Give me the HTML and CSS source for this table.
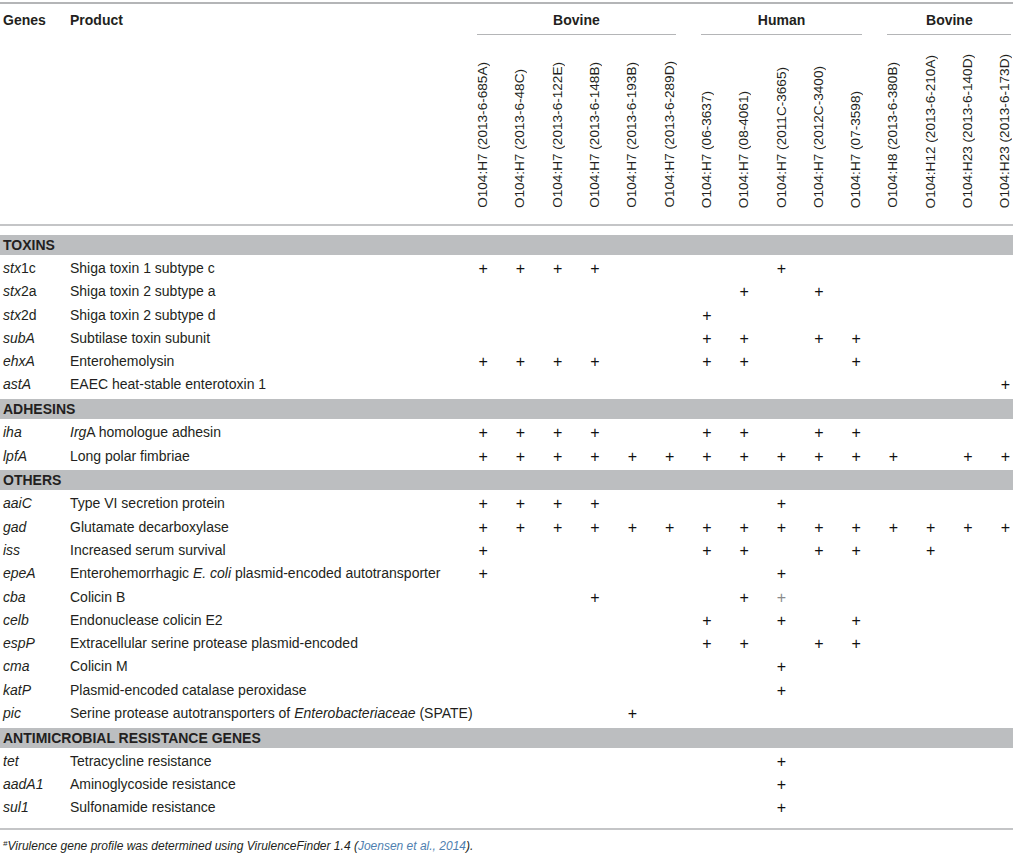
FILE: index.html
```html
<!DOCTYPE html>
<html>
<head>
<meta charset="utf-8">
<link rel="stylesheet" href="styles.css">
</head>
<body>
<div class="table">
  <div class="head-row">
    <div class="h-gene">Genes</div>
    <div class="h-prod">Product</div>
    <div class="group g-bov1">Bovine</div>
    <div class="group g-hum">Human</div>
    <div class="group g-bov2">Bovine</div>
  </div>
  <div class="label-row">
    <div></div><div></div>
    <div class="lab"><span>O104:H7 (2013-6-685A)</span></div>
    <div class="lab"><span>O104:H7 (2013-6-48C)</span></div>
    <div class="lab"><span>O104:H7 (2013-6-122E)</span></div>
    <div class="lab"><span>O104:H7 (2013-6-148B)</span></div>
    <div class="lab"><span>O104:H7 (2013-6-193B)</span></div>
    <div class="lab"><span>O104:H7 (2013-6-289D)</span></div>
    <div class="lab"><span>O104:H7 (06-3637)</span></div>
    <div class="lab"><span>O104:H7 (08-4061)</span></div>
    <div class="lab"><span>O104:H7 (2011C-3665)</span></div>
    <div class="lab"><span>O104:H7 (2012C-3400)</span></div>
    <div class="lab"><span>O104:H7 (07-3598)</span></div>
    <div class="lab"><span>O104:H8 (2013-6-380B)</span></div>
    <div class="lab"><span>O104:H12 (2013-6-210A)</span></div>
    <div class="lab"><span>O104:H23 (2013-6-140D)</span></div>
    <div class="lab"><span>O104:H23 (2013-6-173D)</span></div>
  </div>

  <div class="section first">TOXINS</div>
  <div class="row"><div class="gene"><i>stx</i>1c</div><div class="prod">Shiga toxin 1 subtype c</div>
    <div class="c">+</div><div class="c">+</div><div class="c">+</div><div class="c">+</div><div class="c"></div><div class="c"></div><div class="c"></div><div class="c"></div><div class="c">+</div><div class="c"></div><div class="c"></div><div class="c"></div><div class="c"></div><div class="c"></div><div class="c"></div></div>
  <div class="row"><div class="gene"><i>stx</i>2a</div><div class="prod">Shiga toxin 2 subtype a</div>
    <div class="c"></div><div class="c"></div><div class="c"></div><div class="c"></div><div class="c"></div><div class="c"></div><div class="c"></div><div class="c">+</div><div class="c"></div><div class="c">+</div><div class="c"></div><div class="c"></div><div class="c"></div><div class="c"></div><div class="c"></div></div>
  <div class="row"><div class="gene"><i>stx</i>2d</div><div class="prod">Shiga toxin 2 subtype d</div>
    <div class="c"></div><div class="c"></div><div class="c"></div><div class="c"></div><div class="c"></div><div class="c"></div><div class="c">+</div><div class="c"></div><div class="c"></div><div class="c"></div><div class="c"></div><div class="c"></div><div class="c"></div><div class="c"></div><div class="c"></div></div>
  <div class="row"><div class="gene"><i>subA</i></div><div class="prod">Subtilase toxin subunit</div>
    <div class="c"></div><div class="c"></div><div class="c"></div><div class="c"></div><div class="c"></div><div class="c"></div><div class="c">+</div><div class="c">+</div><div class="c"></div><div class="c">+</div><div class="c">+</div><div class="c"></div><div class="c"></div><div class="c"></div><div class="c"></div></div>
  <div class="row"><div class="gene"><i>ehxA</i></div><div class="prod">Enterohemolysin</div>
    <div class="c">+</div><div class="c">+</div><div class="c">+</div><div class="c">+</div><div class="c"></div><div class="c"></div><div class="c">+</div><div class="c">+</div><div class="c"></div><div class="c"></div><div class="c">+</div><div class="c"></div><div class="c"></div><div class="c"></div><div class="c"></div></div>
  <div class="row"><div class="gene"><i>astA</i></div><div class="prod">EAEC heat-stable enterotoxin 1</div>
    <div class="c"></div><div class="c"></div><div class="c"></div><div class="c"></div><div class="c"></div><div class="c"></div><div class="c"></div><div class="c"></div><div class="c"></div><div class="c"></div><div class="c"></div><div class="c"></div><div class="c"></div><div class="c"></div><div class="c">+</div></div>

  <div class="section">ADHESINS</div>
  <div class="row"><div class="gene"><i>iha</i></div><div class="prod"><i>Irg</i>A homologue adhesin</div>
    <div class="c">+</div><div class="c">+</div><div class="c">+</div><div class="c">+</div><div class="c"></div><div class="c"></div><div class="c">+</div><div class="c">+</div><div class="c"></div><div class="c">+</div><div class="c">+</div><div class="c"></div><div class="c"></div><div class="c"></div><div class="c"></div></div>
  <div class="row"><div class="gene"><i>lpfA</i></div><div class="prod">Long polar fimbriae</div>
    <div class="c">+</div><div class="c">+</div><div class="c">+</div><div class="c">+</div><div class="c">+</div><div class="c">+</div><div class="c">+</div><div class="c">+</div><div class="c">+</div><div class="c">+</div><div class="c">+</div><div class="c">+</div><div class="c"></div><div class="c">+</div><div class="c">+</div></div>

  <div class="section">OTHERS</div>
  <div class="row"><div class="gene"><i>aaiC</i></div><div class="prod">Type VI secretion protein</div>
    <div class="c">+</div><div class="c">+</div><div class="c">+</div><div class="c">+</div><div class="c"></div><div class="c"></div><div class="c"></div><div class="c"></div><div class="c">+</div><div class="c"></div><div class="c"></div><div class="c"></div><div class="c"></div><div class="c"></div><div class="c"></div></div>
  <div class="row"><div class="gene"><i>gad</i></div><div class="prod">Glutamate decarboxylase</div>
    <div class="c">+</div><div class="c">+</div><div class="c">+</div><div class="c">+</div><div class="c">+</div><div class="c">+</div><div class="c">+</div><div class="c">+</div><div class="c">+</div><div class="c">+</div><div class="c">+</div><div class="c">+</div><div class="c">+</div><div class="c">+</div><div class="c">+</div></div>
  <div class="row"><div class="gene"><i>iss</i></div><div class="prod">Increased serum survival</div>
    <div class="c">+</div><div class="c"></div><div class="c"></div><div class="c"></div><div class="c"></div><div class="c"></div><div class="c">+</div><div class="c">+</div><div class="c"></div><div class="c">+</div><div class="c">+</div><div class="c"></div><div class="c">+</div><div class="c"></div><div class="c"></div></div>
  <div class="row"><div class="gene"><i>epeA</i></div><div class="prod">Enterohemorrhagic <i>E. coli</i> plasmid-encoded autotransporter</div>
    <div class="c">+</div><div class="c"></div><div class="c"></div><div class="c"></div><div class="c"></div><div class="c"></div><div class="c"></div><div class="c"></div><div class="c">+</div><div class="c"></div><div class="c"></div><div class="c"></div><div class="c"></div><div class="c"></div><div class="c"></div></div>
  <div class="row"><div class="gene"><i>cba</i></div><div class="prod">Colicin B</div>
    <div class="c"></div><div class="c"></div><div class="c"></div><div class="c">+</div><div class="c"></div><div class="c"></div><div class="c"></div><div class="c">+</div><div class="c light">+</div><div class="c"></div><div class="c"></div><div class="c"></div><div class="c"></div><div class="c"></div><div class="c"></div></div>
  <div class="row"><div class="gene"><i>celb</i></div><div class="prod">Endonuclease colicin E2</div>
    <div class="c"></div><div class="c"></div><div class="c"></div><div class="c"></div><div class="c"></div><div class="c"></div><div class="c">+</div><div class="c"></div><div class="c">+</div><div class="c"></div><div class="c">+</div><div class="c"></div><div class="c"></div><div class="c"></div><div class="c"></div></div>
  <div class="row"><div class="gene"><i>espP</i></div><div class="prod">Extracellular serine protease plasmid-encoded</div>
    <div class="c"></div><div class="c"></div><div class="c"></div><div class="c"></div><div class="c"></div><div class="c"></div><div class="c">+</div><div class="c">+</div><div class="c"></div><div class="c">+</div><div class="c">+</div><div class="c"></div><div class="c"></div><div class="c"></div><div class="c"></div></div>
  <div class="row"><div class="gene"><i>cma</i></div><div class="prod">Colicin M</div>
    <div class="c"></div><div class="c"></div><div class="c"></div><div class="c"></div><div class="c"></div><div class="c"></div><div class="c"></div><div class="c"></div><div class="c">+</div><div class="c"></div><div class="c"></div><div class="c"></div><div class="c"></div><div class="c"></div><div class="c"></div></div>
  <div class="row"><div class="gene"><i>katP</i></div><div class="prod">Plasmid-encoded catalase peroxidase</div>
    <div class="c"></div><div class="c"></div><div class="c"></div><div class="c"></div><div class="c"></div><div class="c"></div><div class="c"></div><div class="c"></div><div class="c">+</div><div class="c"></div><div class="c"></div><div class="c"></div><div class="c"></div><div class="c"></div><div class="c"></div></div>
  <div class="row"><div class="gene"><i>pic</i></div><div class="prod">Serine protease autotransporters of <i>Enterobacteriaceae</i> (SPATE)</div>
    <div class="c"></div><div class="c"></div><div class="c"></div><div class="c"></div><div class="c">+</div><div class="c"></div><div class="c"></div><div class="c"></div><div class="c"></div><div class="c"></div><div class="c"></div><div class="c"></div><div class="c"></div><div class="c"></div><div class="c"></div></div>

  <div class="section">ANTIMICROBIAL RESISTANCE GENES</div>
  <div class="row"><div class="gene"><i>tet</i></div><div class="prod">Tetracycline resistance</div>
    <div class="c"></div><div class="c"></div><div class="c"></div><div class="c"></div><div class="c"></div><div class="c"></div><div class="c"></div><div class="c"></div><div class="c">+</div><div class="c"></div><div class="c"></div><div class="c"></div><div class="c"></div><div class="c"></div><div class="c"></div></div>
  <div class="row"><div class="gene"><i>aadA1</i></div><div class="prod">Aminoglycoside resistance</div>
    <div class="c"></div><div class="c"></div><div class="c"></div><div class="c"></div><div class="c"></div><div class="c"></div><div class="c"></div><div class="c"></div><div class="c">+</div><div class="c"></div><div class="c"></div><div class="c"></div><div class="c"></div><div class="c"></div><div class="c"></div></div>
  <div class="row"><div class="gene"><i>sul1</i></div><div class="prod">Sulfonamide resistance</div>
    <div class="c"></div><div class="c"></div><div class="c"></div><div class="c"></div><div class="c"></div><div class="c"></div><div class="c"></div><div class="c"></div><div class="c">+</div><div class="c"></div><div class="c"></div><div class="c"></div><div class="c"></div><div class="c"></div><div class="c"></div></div>

  <div class="foot">
    <p class="note"><sup>#</sup>Virulence gene profile was determined using VirulenceFinder 1.4 (<span class="ref">Joensen et al., 2014</span>).</p>
  </div>
</div>
</body>
</html>
```

FILE: styles.css
```css
html, body {
  margin: 0;
  padding: 0;
  background: #ffffff;
}

body {
  font-family: "Liberation Sans", Arial, Helvetica, sans-serif;
  font-size: 14px;
  color: #231f20;
}

.table {
  width: 1013px;
  margin-top: 2px;
  border-top: 2px solid #b4b5b7;
  overflow: hidden;
}

.head-row,
.label-row,
.row {
  display: grid;
  grid-template-columns: 70px 394.5px repeat(15, 37.3px);
}

.head-row {
  padding-top: 8px;
  font-weight: bold;
  line-height: 17px;
}

.h-gene {
  padding-left: 3px;
}

.group {
  margin: 0 12.5px;
  padding-bottom: 5px;
  border-bottom: 1px solid #b4b5b7;
  text-align: center;
}

.g-bov1 { grid-column: 3 / span 6; }
.g-hum { grid-column: 9 / span 5; }
.g-bov2 { grid-column: 14 / span 4; }

.label-row {
  height: 189px;
  border-bottom: 2px solid #c4c5c7;
}

.lab {
  display: flex;
  justify-content: center;
  align-items: flex-end;
  padding-bottom: 16px;
}

.lab span {
  writing-mode: vertical-rl;
  transform: rotate(180deg);
  font-size: 13.6px;
  line-height: 14px;
  white-space: nowrap;
}

.section {
  height: 20px;
  line-height: 20px;
  margin: 2.5px 0 2px;
  padding-left: 3px;
  background: #bcbec0;
  font-weight: bold;
}

.section.first {
  margin-top: 9px;
}

.row {
  height: 23.3px;
  line-height: 23.3px;
}

.gene {
  padding-left: 3px;
  white-space: nowrap;
}

.prod {
  white-space: nowrap;
}

.c {
  text-align: center;
  font-size: 16px;
  color: #111111;
}

.c.light {
  color: #8a8a8c;
}

.foot {
  margin-top: 8px;
  border-top: 2px solid #c4c5c7;
}

.note {
  margin: 0;
  padding: 9px 0 0 3px;
  font-size: 12px;
  line-height: 15px;
  font-style: italic;
}

.note sup {
  font-size: 8px;
  vertical-align: top;
  line-height: 10px;
}

.ref {
  color: #4f7fb0;
}
```
